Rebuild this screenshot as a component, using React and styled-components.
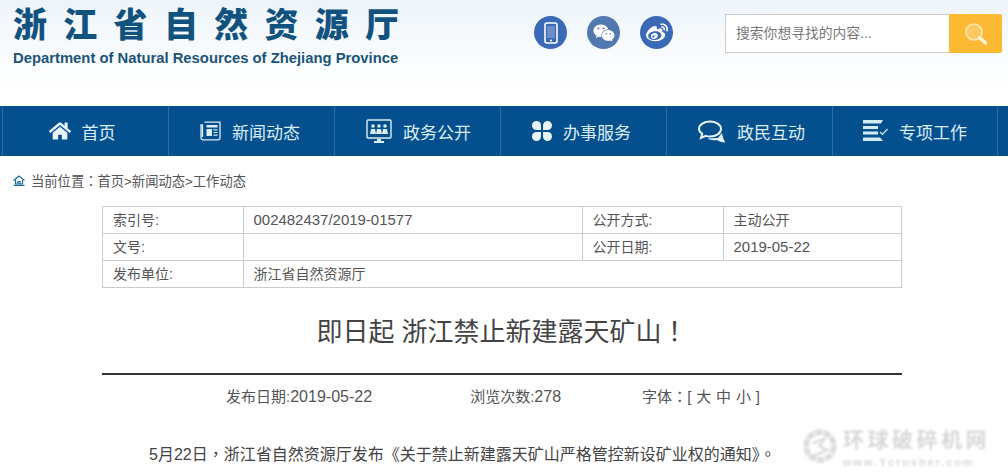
import React from 'react'
import styled, { createGlobalStyle } from 'styled-components'
import { FaHome, FaWeibo, FaWeixin } from 'react-icons/fa'

const CJK = `"Liberation Sans", "Noto Sans CJK SC", sans-serif`

const GlobalStyle = createGlobalStyle`
  html, body {
    margin: 0;
    padding: 0;
    background: #fff;
    font-family: ${CJK};
  }
`
const Page = styled.div`
  position: relative;
  width: 1008px;
  height: 475px;
  overflow: hidden;
  background: #fff;
  color: #555;
`
const Header = styled.header`
  height: 106px;
  box-sizing: border-box;
  padding: 0 6px 0 13px;
  display: flex;
  justify-content: space-between;
  background: linear-gradient(180deg, #edf4fa 0%, #f8fbfd 45%, #fff 90%);
`
const Logo = styled.div`
  width: 400px;
`
const LogoTitle = styled.h1`
  margin: 0;
  padding-top: 2px;
  font-size: 34px;
  line-height: 46px;
  font-weight: 900;
  letter-spacing: 16.3px;
  white-space: nowrap;
  color: #11527f;
`
const LogoEnglish = styled.div`
  margin-top: 1px;
  font-size: 14.82px;
  line-height: 18px;
  font-weight: 700;
  white-space: nowrap;
  color: #1b5479;
`
const HeaderRight = styled.div`
  display: flex;
  align-items: flex-start;
  padding-top: 14px;
`
const SocialRow = styled.div`
  display: flex;
  gap: 20px;
  margin: 2px 52px 0 0;
`
const SocialIcon = styled.div`
  width: 33px;
  height: 33px;
  border-radius: 50%;
  background: ${(p) => p.$bg || '#3a69b5'};
  color: #fff;
  display: flex;
  align-items: center;
  justify-content: center;
`
const Search = styled.div`
  display: flex;
  width: 277px;
  height: 39px;
`
const SearchInput = styled.div`
  flex: 1;
  box-sizing: border-box;
  border: 1px solid #ccc;
  border-right: 0;
  background: #fff;
  padding-left: 10px;
  font-size: 13.8px;
  line-height: 37px;
  color: #777;
`
const SearchButton = styled.div`
  width: 53px;
  background: #fbb934;
  border-radius: 0 2px 2px 0;
  display: flex;
  align-items: center;
  justify-content: center;
`
const Nav = styled.nav`
  height: 50px;
  padding-left: 2px;
  display: grid;
  grid-template-columns: repeat(6, 166px);
  background: #04508f;
`
const NavItem = styled.a`
  display: flex;
  align-items: center;
  justify-content: center;
  gap: 11px;
  box-sizing: border-box;
  padding: 0 ${(p) => p.$right || 0}px 0 ${(p) => p.$left || 0}px;
  border-left: 1px solid #2d6da6;
  font-size: 17px;
  color: #dcecf5;
  &:last-child {
    border-right: 1px solid #2d6da6;
  }
`
const Crumb = styled.div`
  height: 50px;
  box-sizing: border-box;
  padding: 0 0 2px 13px;
  display: flex;
  align-items: center;
  gap: 6px;
  font-size: 13.3px;
  color: #555;
  white-space: nowrap;
`
const Main = styled.main`
  width: 800px;
  margin-left: 102px;
`
const InfoTable = styled.table`
  width: 799px;
  height: 82px;
  border-collapse: collapse;
  table-layout: fixed;
  font-size: 14px;
  color: #555;
`
const Cell = styled.td`
  height: 26px;
  padding: 0 0 2px 9.5px;
  box-sizing: border-box;
  border: 1px solid #ccc;
  white-space: nowrap;
  &:first-child {
    padding-left: 10px;
  }
`
const Latin = styled.span`
  font-size: 1.07em;
`
// full width marks sit centred in the reference, the TC cut of the font does that
const Punct = styled.span`
  font-family: "Noto Sans CJK TC", sans-serif;
`
const Title = styled.h2`
  margin: 0;
  padding-top: 25px;
  height: 60px;
  font-size: 26px;
  line-height: 34px;
  font-weight: 400;
  text-align: center;
  color: #444;
  white-space: nowrap;
`
const Rule = styled.div`
  height: 2px;
  background: #333;
`
const Meta = styled.div`
  display: flex;
  height: 40px;
  align-items: center;
  font-size: 15px;
  color: #555;
  white-space: nowrap;
`
const MetaItem = styled.span`
  margin-left: ${(p) => p.$left}px;
  word-spacing: ${(p) => p.$spread || 0}px;
`
const Paragraph = styled.p`
  margin: 24px 0 0 47px;
  font-size: 16px;
  line-height: 28px;
  color: #444;
  white-space: nowrap;
`
const Watermark = styled.div`
  position: absolute;
  left: 802px;
  top: 428px;
  display: flex;
  align-items: flex-start;
  gap: 5px;
  color: #d8d8d8;
  filter: blur(0.9px);
`
const MarkName = styled.div`
  font-size: 21px;
  line-height: 24px;
  letter-spacing: 3.5px;
  font-weight: 700;
  white-space: nowrap;
`
const MarkUrl = styled.div`
  margin-top: 3px;
  font-size: 11px;
  line-height: 14px;
  font-weight: 700;
  letter-spacing: 1.9px;
  white-space: nowrap;
`

function PhoneIcon() {
  return (
    <svg width="14" height="22" viewBox="0 0 14 22" fill="none">
      <rect x="1" y="1" width="12" height="20" rx="2" stroke="#fff" strokeWidth="1.6" />
      <rect x="3" y="4" width="8" height="12" fill="#fff" opacity="0.25" />
      <circle cx="7" cy="18.6" r="1" fill="#fff" />
    </svg>
  )
}

function MagnifierIcon() {
  return (
    <svg width="24" height="24" viewBox="0 0 24 24" fill="none">
      <circle cx="10" cy="10" r="8" fill="#fcc95f" stroke="#fde7b3" strokeWidth="1.6" />
      <path d="M15.5 15.5 L21.5 21" stroke="#fff3d6" strokeWidth="3.4" strokeLinecap="round" />
    </svg>
  )
}

function NewsIcon() {
  return (
    <svg width="21" height="20" viewBox="0 0 21 20" fill="none" stroke="#dcecf5">
      <path d="M4.5 1.2 H20 V17 a1.8 1.8 0 0 1 -1.8 1.8 H3 a2 2 0 0 1 -2 -2 V4 H2.5 V16" strokeWidth="1.3" />
      <rect x="6.5" y="4" width="11" height="2.5" fill="#dcecf5" stroke="none" />
      <rect x="6.5" y="8" width="5.5" height="7" fill="#dcecf5" stroke="none" />
      <path d="M13.5 8.8 H17.5 M13.5 11.5 H17.5 M13.5 14.2 H17.5" strokeWidth="1.2" />
    </svg>
  )
}

function MeetingIcon() {
  const heads = [7, 13, 19]
  return (
    <svg width="26" height="25" viewBox="0 0 26 25" fill="none">
      <rect x="1" y="1" width="24" height="18" rx="1" stroke="#dcecf5" strokeWidth="1.4" />
      {heads.map((x) => (
        <g key={x} fill="#dcecf5">
          <circle cx={x} cy="7" r="1.8" />
          <path d={`M${x - 3} 15 L${x - 2} 10 H${x + 2} L${x + 3} 15 Z`} />
        </g>
      ))}
      <path d="M11 20 H15 V22 H18 V24 H8 V22 H11 Z" fill="#dcecf5" />
    </svg>
  )
}

function PetalsIcon() {
  return (
    <svg width="20" height="20" viewBox="0 0 20 20" fill="#e8f3f8">
      <path d="M4.5 0 A4.5 4.5 0 0 1 9 4.5 V9 H4.5 A4.5 4.5 0 0 1 4.5 0 Z" />
      <path d="M15.5 0 A4.5 4.5 0 0 0 11 4.5 V9 H15.5 A4.5 4.5 0 0 0 15.5 0 Z" />
      <path d="M4.5 20 A4.5 4.5 0 0 0 9 15.5 V11 H4.5 A4.5 4.5 0 0 0 4.5 20 Z" />
      <path d="M15.5 20 A4.5 4.5 0 0 1 11 15.5 V11 H15.5 A4.5 4.5 0 0 1 15.5 20 Z" />
    </svg>
  )
}

function ChatIcon() {
  return (
    <svg width="28" height="23" viewBox="0 0 28 23" fill="none">
      <path d="M24 13 C25 18 26 21 27.5 22.5 C24 22.5 21 21.5 19 20 C15 20.5 12 20 9.5 18.5 L20 18 Z" fill="#e8f3f8" />
      <path
        d="M12 1.5 C18 1.5 23 4.6 23 9 C23 13.4 18 16.5 12 16.5 C10.5 16.5 9 16.3 7.8 15.9 L3 18 L4.2 13.8 C2.2 12.4 1 10.8 1 9 C1 4.6 6 1.5 12 1.5 Z"
        fill="#04508f"
        stroke="#e8f3f8"
        strokeWidth="2"
      />
    </svg>
  )
}

function ChecklistIcon() {
  return (
    <svg width="25" height="22" viewBox="0 0 25 22" fill="#d3eaf3">
      <path d="M0 0 H20 L18 3.5 H0 Z" />
      <path d="M0 6 H15 V9 H0 Z" />
      <path d="M0 11.5 H15 V14.5 H0 Z" />
      <path d="M0 17.5 H17 L20 21 H0 Z" />
      <path d="M17 12 L19.5 14.5 L24.5 9" fill="none" stroke="#d3eaf3" strokeWidth="1.2" />
    </svg>
  )
}

function CrumbHomeIcon() {
  return (
    <svg width="12" height="11" viewBox="0 0 12 11" fill="none" stroke="#1d6a96" strokeWidth="1.2">
      <path d="M0.5 5.5 L6 1 L11.5 5.5" />
      <path d="M2.5 5 V9 H9.5 V5 M5 9 V6.5 H7 V9" />
      <path d="M0.5 10.4 H11.5" />
    </svg>
  )
}

function GearMark() {
  return (
    <svg width="36" height="36" viewBox="0 0 44 44" fill="none" stroke="#dcdcdc">
      <circle cx="22" cy="22" r="17" strokeWidth="7" strokeDasharray="9 1.5" />
      <path d="M13 19 L29 12 L21 22 L31 27 L14 34" strokeWidth="3" />
    </svg>
  )
}

const navItems = [
  { label: '首页', icon: <FaHome size={22} color="#e8f3f8" />, right: 7 },
  { label: '新闻动态', icon: <NewsIcon />, right: 3 },
  { label: '政务公开', icon: <MeetingIcon />, left: 2 },
  { label: '办事服务', icon: <PetalsIcon />, right: 4 },
  { label: '政民互动', icon: <ChatIcon />, left: 4 },
  { label: '专项工作', icon: <ChecklistIcon /> },
]

export default function App() {
  return (
    <Page>
      <GlobalStyle />
      <Header>
        <Logo>
          <LogoTitle>浙江省自然资源厅</LogoTitle>
          <LogoEnglish>Department of Natural Resources of Zhejiang Province</LogoEnglish>
        </Logo>
        <HeaderRight>
          <SocialRow>
            <SocialIcon>
              <PhoneIcon />
            </SocialIcon>
            <SocialIcon $bg="#5179af">
              <FaWeixin size={22} />
            </SocialIcon>
            <SocialIcon>
              <FaWeibo size={22} />
            </SocialIcon>
          </SocialRow>
          <Search>
            <SearchInput>搜索你想寻找的内容...</SearchInput>
            <SearchButton>
              <MagnifierIcon />
            </SearchButton>
          </Search>
        </HeaderRight>
      </Header>
      <Nav>
        {navItems.map((item) => (
          <NavItem key={item.label} $left={item.left} $right={item.right}>
            {item.icon}
            <span>{item.label}</span>
          </NavItem>
        ))}
      </Nav>
      <Crumb>
        <CrumbHomeIcon />
        <span>
          当前位置<Punct>：</Punct>首页&gt;新闻动态&gt;工作动态
        </span>
      </Crumb>
      <Main>
        <InfoTable>
          <colgroup>
            <col width="141" />
            <col width="339" />
            <col width="141" />
            <col width="178" />
          </colgroup>
          <tbody>
            <tr>
              <Cell>索引号:</Cell>
              <Cell>
                <Latin>002482437/2019-01577</Latin>
              </Cell>
              <Cell>公开方式:</Cell>
              <Cell>主动公开</Cell>
            </tr>
            <tr>
              <Cell>文号:</Cell>
              <Cell />
              <Cell>公开日期:</Cell>
              <Cell>
                <Latin>2019-05-22</Latin>
              </Cell>
            </tr>
            <tr>
              <Cell>发布单位:</Cell>
              <Cell colSpan={3}>浙江省自然资源厅</Cell>
            </tr>
          </tbody>
        </InfoTable>
        <Title>
          即日起 浙江禁止新建露天矿山<Punct>！</Punct>
        </Title>
        <Rule />
        <Meta>
          <MetaItem $left={124}>
            发布日期:<Latin>2019-05-22</Latin>
          </MetaItem>
          <MetaItem $left={98}>
            浏览次数:<Latin>278</Latin>
          </MetaItem>
          <MetaItem $left={81} $spread={0.7}>
            字体<Punct>：</Punct>[ 大 中 小 ]
          </MetaItem>
        </Meta>
        <Paragraph>
          5月22日<Punct>，</Punct>浙江省自然资源厅发布《关于禁止新建露天矿山严格管控新设矿业权的通知》<Punct>。</Punct>
        </Paragraph>
      </Main>
      <Watermark>
        <GearMark />
        <div>
          <MarkName>环球破碎机网</MarkName>
          <MarkUrl>www.Ycrusher.com</MarkUrl>
        </div>
      </Watermark>
    </Page>
  )
}
